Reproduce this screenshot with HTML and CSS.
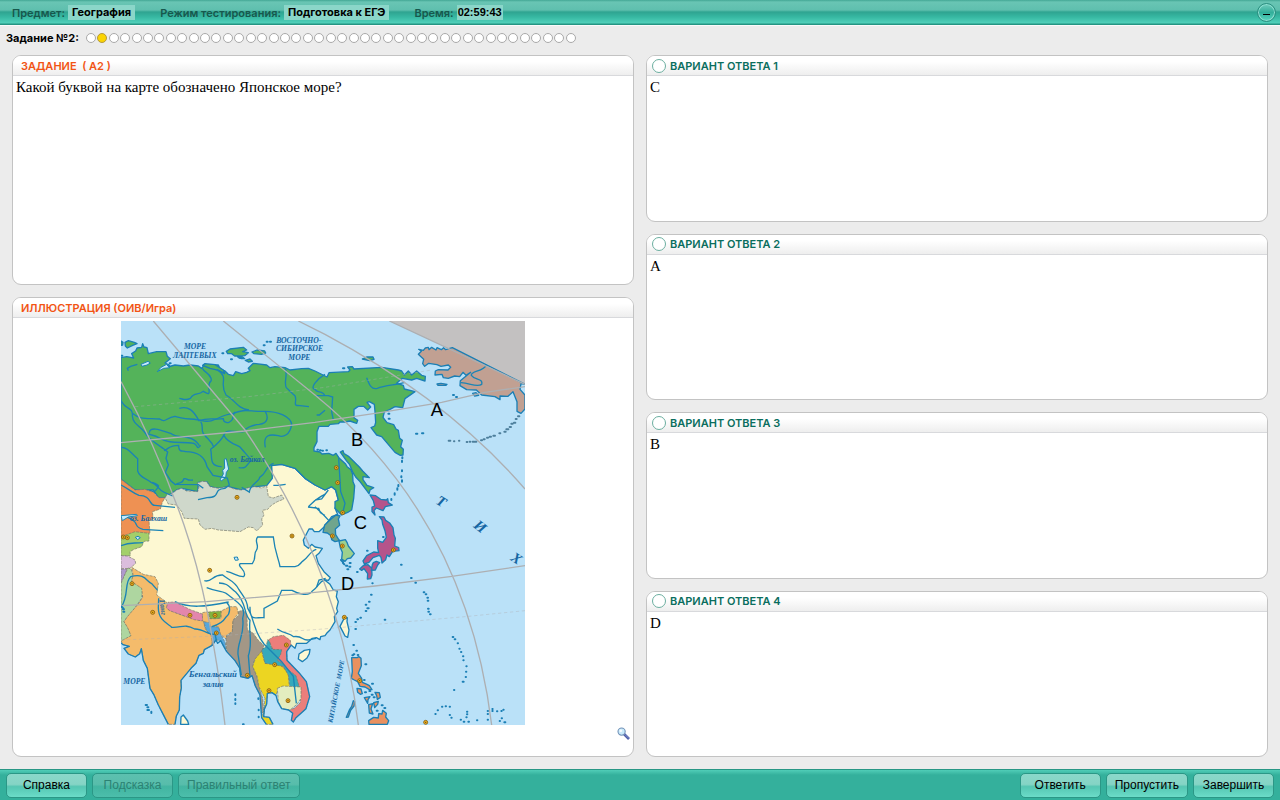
FILE: index.html
```html
<!DOCTYPE html>
<html lang="ru">
<head>
<meta charset="utf-8">
<meta name="viewport" content="width=device-width, initial-scale=1">
<title>География — Подготовка к ЕГЭ</title>
<link rel="stylesheet" href="styles.css">
</head>
<body>
<header class="topbar">
  <dl class="facts">
    <div class="fact"><dt>Предмет:</dt><dd>География</dd></div>
    <div class="fact"><dt>Режим тестирования:</dt><dd>Подготовка к ЕГЭ</dd></div>
    <div class="fact"><dt>Время:</dt><dd class="clock">02:59:43</dd></div>
  </dl>
  <button class="minimize" type="button" aria-label="Свернуть"><span class="minimize-mark"></span></button>
</header>

<nav class="progress">
  <span class="progress-label">Задание №2:</span>
  <ol class="dots">
    <li></li><li class="current"></li><li></li><li></li><li></li><li></li><li></li><li></li><li></li><li></li>
    <li></li><li></li><li></li><li></li><li></li><li></li><li></li><li></li><li></li><li></li>
    <li></li><li></li><li></li><li></li><li></li><li></li><li></li><li></li><li></li><li></li>
    <li></li><li></li><li></li><li></li><li></li><li></li><li></li><li></li><li></li><li></li>
    <li></li><li></li><li></li>
  </ol>
</nav>

<main class="workspace">
  <div class="column question-column">
    <section class="panel">
      <h2 class="panel-head task-head">ЗАДАНИЕ&nbsp; ( А2 )</h2>
      <p class="panel-text">Какой буквой на карте обозначено Японское море?</p>
    </section>
    <section class="panel figure-panel">
      <h2 class="panel-head task-head">ИЛЛЮСТРАЦИЯ (ОИВ/Игра)</h2>
      <div class="figure">
        <svg class="map" viewBox="18 18 1212 1212" role="img" aria-label="Карта Восточной Азии">
          <defs>
            <g id="city"><circle r="6" fill="#f3b21c" stroke="#805c13" stroke-width="2.5"/><circle r="2" fill="#68480f"/></g>
          </defs>
          <rect x="18" y="18" width="1212" height="1212" fill="#bae1f8"/>
          <path d="M823 18H1230V208Z" fill="#c3c1c1"/>

          <g class="coast">
            <path fill="#fdf8d2" d="M18 490L150 545L470 450L500 448L540 460L570 490L600 510L630 525L650 515L662 525L670 555L660 580L668 598L650 605L628 635L612 650L598 650L592 642L582 642L565 675L568 690L580 700L590 688L600 696L622 700L612 715L603 722L610 745L627 770L646 788L640 796L628 794L645 808L655 825L667 828L664 845L670 860L665 880L668 890L658 905L660 920L645 945L635 955L630 962L617 965L615 974L604 968L592 970L575 985L545 985L540 1000L528 990L500 1000L440 1000L350 940L18 820Z"/>
            <path fill="#54b35a" d="M18 128L35 125L56 129L50 116L62 108L66 99L80 97L83 86L87 96L96 98L100 116L125 110L153 110L157 124L166 131L150 144L163 150L158 156L180 150L205 153L225 150L250 153L260 160L268 149L310 150L316 163L330 168L340 178L355 182L362 170L380 176L395 172L405 167L400 160L415 145L455 150L465 158L480 155L510 158L525 165L560 161L580 160L600 168L636 186L642 173L700 170L705 165L698 156L712 155L717 162L800 157L850 165L860 168L868 180L880 168L890 180L905 168L920 181L931 184L930 198L905 190L890 195L862 190L845 205L865 211L868 222L900 230L870 251L863 278L840 275L825 283L808 291L804 307L816 323L836 329L843 342L850 346L854 370L862 376L857 395L865 403L864 420L856 421L840 412L800 365L785 360L768 338L779 333L782 322L780 290L778 268L763 260L756 262L767 276L758 285L746 274L730 274L717 283L717 308L728 316L725 325L705 318L690 321L675 321L670 326L645 328L640 334L612 334L606 350L606 380L597 398L597 408L615 411L621 417L641 415L655 421L663 415L673 430L691 446L697 456L707 463L713 478L714 500L719 512L716 550L710 585L698 592L680 600L660 580L660 560L670 555L662 525L650 515L630 525L600 510L570 490L540 460L500 448L470 452L472 490L455 512L420 515L380 525L340 515L310 520L285 515L275 500L250 502L248 530L200 520L185 525L150 548L130 548L115 525L60 525L18 493Z"/>
            <path fill="#54b35a" d="M30 82L40 77L58 82L66 86L53 91L37 99L31 93ZM334 109L345 102L385 97L395 105L383 110L400 113L389 122L359 123L350 116L338 116ZM411 111L426 105L449 108L452 114L439 118L417 116ZM391 136L405 132L412 139L400 141ZM368 126L380 124L389 131L379 131ZM263 151L270 146L300 149L325 165L329 176L311 166L285 160ZM742 132L755 126L774 126L777 133L764 137ZM18 78L24 82L23 90L18 91ZM676 411L684 407L687 416L702 425L733 456L743 468L763 488L744 485L744 494L756 511L776 518L765 525L762 536L735 500L722 486L714 473L704 449L694 437Z"/>
            <path fill="#c1a092" d="M910 118L919 109L911 103L925 106L931 99L940 97L942 104L950 97L963 105L966 98L979 104L986 98L992 104L1012 98L1230 208L1218 206L1215 223L1230 240V282L1218 295L1206 289L1206 260L1194 230L1179 244L1155 243L1155 254L1140 245L1100 240L1084 225L1055 224L1035 212L1036 197L1067 172L1053 181L1044 172L1034 185L1019 183L1000 190L985 188L981 178L960 180L961 168L970 164L999 165L1007 157L1000 150L978 154L966 149L941 145L929 154L923 146L926 133Z"/>
            <path fill="#c1a092" d="M1073 235L1083 233L1091 241L1079 243ZM966 207L978 205L996 208L993 211L969 211Z"/>
            <path fill="#b5548b" d="M765 540L782 542L797 553L814 555L818 551L820 563L832 570L811 575L804 587L784 579L777 587L780 600L771 590L771 576L779 573L775 557ZM793 605L807 606L812 616L824 624L834 638L837 660L841 670L839 693L851 698L852 707L833 709L823 725L816 720L812 734L801 744L798 727L793 721L774 728L762 742L748 747L744 738L755 722L776 711L791 713L788 699L788 677L803 682L814 667L810 647L803 628L801 615ZM775 743L784 739L794 743L788 750L781 765L769 766L772 749ZM734 762L746 751L759 749L770 760L771 780L767 791L757 792L758 776L747 761L740 766Z"/>
            <path fill="#70a58d" d="M663 600L675 603L670 612L674 631L661 642L662 659L669 670L674 677L660 680L650 674L648 662L637 654L624 652L629 630L649 611Z"/>
            <path fill="#9dd08d" d="M672 678L691 674L696 682L700 693L718 716L707 729L697 731L690 739L680 732L682 712L676 698Z"/>
            <path fill="#fdf8d2" d="M687 911L697 908L696 920L702 945L698 967L690 963L683 949L675 934ZM568 1006L585 1003L583 1016L576 1029L562 1040L550 1032L552 1017ZM197 1228L198 1206L205 1200L218 1218L221 1228Z"/>
            <path fill="#e99160" d="M710 1028L726 1028L732 1025L738 1030L739 1052L730 1075L740 1090L742 1102L756 1108L763 1112L771 1124L762 1123L750 1116L735 1114L728 1100L718 1095L709 1090L712 1070ZM726 1120L738 1122L742 1136L736 1138L728 1132ZM748 1148L765 1145L759 1154L758 1165ZM780 1132L793 1133L796 1147L787 1153L785 1142ZM761 1169L773 1166L768 1182L774 1197L763 1194ZM776 1163L790 1159L788 1168L779 1178ZM762 1228L761 1217L776 1207L790 1209L791 1196L801 1197L803 1186L814 1195L812 1206L821 1217L817 1228ZM715 1157L719 1160L717 1173L707 1186L700 1206L694 1207L704 1183L710 1174Z"/>
          </g>

          <g class="lands">
            <path fill="#cfd8cb" d="M150 548L158 536L170 537L185 525L200 520L215 528L248 530L252 516L247 504L262 499L275 500L285 515L310 520L340 515L360 523L380 525L400 518L420 515L440 519L455 512L460 545L475 549L500 540L507 552L487 560L470 570L458 583L442 586L447 600L440 612L443 630L425 648L415 638L400 636L375 650L340 647L310 645L290 640L270 643L255 630L250 612L208 610L200 590L185 570L160 567Z"/>
            <path fill="#ee9153" d="M18 493L60 525L90 523L115 532L132 548L150 548L142 562L136 582L112 590L115 612L102 618L105 655L60 655L18 665Z"/>
            <path fill="#a3cf6a" d="M18 665L60 650L102 655L102 678L87 679L80 695L57 703L45 710L46 722L18 722Z"/>
            <path fill="#dbbddd" d="M18 722L38 723L60 735L62 745L45 760L18 762Z"/>
            <path fill="#af99cd" d="M18 762H37L27 785L25 800L18 805Z"/>
            <path fill="#aed6a0" d="M18 805L28 782L39 759L48 762L54 780L50 800L72 808L83 823L80 850L55 885L36 907L27 920L38 937L49 963L18 981Z"/>
            <path fill="#f4bb6b" d="M50 757L85 778L120 785L130 805L125 840L155 862L160 884L200 900L260 917L262 893L278 890L285 910H318V888L345 875L365 875L370 895L354 916L352 950L335 960L334 973L315 957L311 937L285 935L266 920L270 940L288 960L292 981L290 992L268 1004L265 1015L252 1021L243 1045L228 1060L198 1096L199 1119L194 1146L193 1185L184 1203L180 1228H160L148 1205L130 1170L116 1138L105 1120L97 1060L85 1036L79 1001L74 1016L61 1026L40 1017L27 1000L43 994L24 989L18 978L48 962L38 938L27 920L38 904L69 868L83 847L80 820L50 800L54 778Z"/>
            <path fill="#e386ac" d="M154 878L159 862L180 861L226 884L262 897L263 918L238 914L200 900L164 887Z"/>
            <path fill="#82b33e" d="M280 891L318 888L317 908L306 911H285Z"/>
            <path fill="#57a7dc" d="M266 920L285 923V935L311 936L316 956L331 983L333 1004L326 994L317 977L303 975L292 993L291 963L274 946Z"/>
            <path fill="#a39786" d="M370 890L384 885L396 897L397 944L414 954L430 976L447 992L440 1010L416 1040L414 1056L426 1086L430 1110L443 1150L446 1190L439 1196L435 1140L421 1113L411 1082L399 1090L377 1085L374 1059L360 1037L335 1010L333 966L352 950L354 916L371 901Z"/>
            <path fill="#ecd522" d="M440 1008L450 1045L483 1047L506 1054L520 1080L523 1116L490 1120L483 1141L471 1133L457 1135L455 1167L448 1183L446 1205L463 1207L474 1228H454L440 1208L447 1187L450 1150L432 1115L427 1086L413 1054L421 1031Z"/>
            <path fill="#eb7e7b" d="M460 975L475 965L505 961L526 976L528 991L515 1010L516 1036L552 1073L574 1100L584 1145L573 1181L543 1208L535 1221L529 1216L533 1195L521 1185L538 1180L556 1163L557 1122L532 1086L502 1055L483 1042L499 1009L494 1003L475 1005Z"/>
            <path fill="#36a9bb" d="M440 1005L453 995L458 974L464 980L471 1003L500 1004L497 1018L487 1035L503 1046L523 1067L543 1082L553 1116H525L520 1080L505 1054L450 1045Z"/>
            <path fill="#e3edbf" d="M487 1120L504 1113L558 1116V1150L546 1168L525 1185L500 1181L490 1160Z"/>
          </g>

          <g class="coast shoreline">
            <path d="M18 984L24 989L43 994L27 1000L40 1017L61 1026L74 1016L79 1001L85 1036L97 1060L105 1120L116 1138L130 1170L148 1205L160 1228M180 1228L184 1203L193 1185L194 1146L199 1119L198 1096L228 1060L243 1045L252 1021L265 1015L268 1004L290 992L303 975L308 985L317 977L326 994L335 1010L360 1037L374 1059L377 1085L399 1090L411 1082L421 1113L435 1140L439 1196L440 1208L454 1228M474 1228L463 1207L446 1205L448 1183L455 1167L457 1135L471 1133L483 1141L488 1160L500 1181L521 1185L533 1195L529 1216L535 1221L543 1208L573 1181L584 1145L574 1100L552 1073L516 1036L515 1010L528 991"/>
          </g>

          <g class="lakes">
            <path d="M328 433L334 431L341 462L334 472L332 487L319 498L316 493L325 477L323 466L329 459ZM18 602L65 598L67 602L40 606L22 617ZM78 148L99 139L106 144L96 150L81 154ZM127 170L138 157L155 148L159 154L165 158L146 160ZM61 667L69 664L76 668L68 674ZM357 727L367 726L370 735L361 736Z"/>
          </g>

          <g class="rivers">
            <path d="M18 256C30 285 55 275 52 303C55 330 74 330 90 353C98 370 130 390 144 400L158 411L153 430L160 450L151 472L168 498L180 508L250 509L265 520M52 295C75 315 98 309 134 312C152 325 152 308 180 304C205 314 240 310 260 317C300 326 310 300 353 296C390 280 402 290 445 289C490 288 528 305 530 329C525 360 505 368 490 362C465 357 443 358 451 397"/>
            <path d="M193 250C205 252 212 258 226 250C240 228 248 244 265 229C280 237 284 243 282 220C280 190 293 206 288 190C280 170 270 175 262 160M193 280C220 272 235 286 252 317C281 307 300 315 325 311C325 325 343 324 343 321C361 313 349 300 361 290M306 164C345 188 310 204 333 240C360 254 365 280 402 285M297 398C290 377 275 370 270 361C254 350 268 333 257 320M451 290C460 305 460 325 433 328C410 330 390 340 386 350C360 354 332 340 328 358C320 374 300 393 287 403C293 425 280 455 320 455"/>
            <path d="M40 167L37 160L47 154L67 148M327 362C340 386 370 391 375 396C398 423 403 427 408 436C392 455 394 461 371 458"/>
            <path d="M88 351C110 365 110 355 135 370C160 388 200 380 230 384C252 384 242 410 257 391M103 354C104 330 144 348 169 356C194 374 230 354 253 392M147 407C166 398 162 392 191 391C190 416 207 405 212 410C250 410 270 427 276 455L294 481L337 489L343 510L330 520C290 523 322 547 276 548L249 554M180 510C195 498 200 510 207 491C221 490 212 498 234 495M18 397C40 396 50 418 68 431V468C75 490 95 489 108 502C130 507 128 526 148 532L173 543M112 502C140 512 131 515 120 528M510 160C520 180 505 201 514 218L536 239C551 245 532 275 548 271L582 275M630 178C605 192 583 221 600 223C605 236 623 225 630 243M605 300H613L630 286M380 517L403 531C405 506 434 501 434 487C457 475 449 454 476 445M475 511H490L512 508M655 315L650 290L653 246L640 242H600M755 188C763 210 770 225 787 220C810 210 846 210 870 202M671 430L675 495L677 530L690 565L683 594"/>
            <path d="M600 555L620 552L640 525M600 575L626 600L641 616M581 574C603 550 617 546 630 537M579 576L611 580L616 593L630 602M18 510C42 522 51 533 72 541C110 541 102 572 120 571L180 577M39 608C78 622 50 634 84 643L145 647M18 692C45 680 53 686 84 683"/>
            <path d="M268 797C291 804 292 778 323 780C340 795 359 797 372 824C383 843 397 853 398 879L408 899C423 947 430 967 447 987L500 1040L535 1084L544 1165M275 818C309 832 330 828 337 838C387 875 391 883 383 910C390 960 366 982 369 1018L379 1080M312 804C342 805 341 817 362 831C397 866 384 894 405 916C400 950 414 985 400 1022L405 1083M334 769C356 773 369 786 386 785C400 768 364 754 376 746H412C426 727 414 717 424 706C435 691 416 679 428 666H475C480 715 491 730 495 755H540C557 752 553 745 566 736C580 728 584 709 604 703M405 875C404 920 420 906 447 908V880L487 858L500 826H531C553 839 583 844 592 828C613 814 611 800 628 795"/>
            <path d="M18 877C43 842 27 802 47 785C90 773 95 800 110 806L128 826M180 860C220 880 270 876 341 861M131 850L130 878C130 920 166 929 170 937C200 939 208 925 239 942C262 940 280 960 300 958L304 975M290 935C310 930 325 920 334 905C345 897 349 875 334 861M487 942C508 957 521 952 536 965C567 960 560 983 588 973L603 970M605 816L612 795L632 790M1115 149C1105 171 1067 167 1069 181C1080 197 1105 189 1100 208C1085 218 1065 204 1038 203"/>
          </g>

          <g class="grid">
            <path d="M18 200Q130 407 207 630Q287 860 330 1230M115 18L390 345C510 520 680 820 730 1230M325 18L600 240C840 435 1070 740 1130 1230M550 18L630 58Q1000 255 1230 522M823 18L1230 208M18 383L390 348L600 322L800 292L980 262L1110 232L1230 215M18 872L275 860L600 832L780 813L1005 785L1230 752"/>
            <path class="dashed" d="M60 275L400 245L630 217L950 165M18 975L300 963L600 944L1050 905L1230 887"/>
          </g>

          <g class="isles">
            <path d="M322 115h3M348 133h3M373 128h5M446 91h3M455 80h3M465 80h3M164 145h3M18 122h4M684 160h4M1014 240h3M1023 246h3M903 356h4M921 355h4M820 296h3M821 311h3M607 404h2M615 406h2M622 407h2M634 406h2"/>
            <path d="M862 427v3M861 437v4M861 466v3M859 484v3M861 496v4M850 510v4M847 520v4M839 535v4M829 552v3M756 707h2M804 666h2M726 771h2M772 805h1M768 839h2M762 860h2M752 869h2M757 880h4M752 888h2M858 749h2M888 789h2M901 803h2M926 832h2M932 838h2M937 848h2M938 857h2M939 881h2M940 890h2M945 898h2M809 914h2M736 908h2M727 913h2M721 921h2M721 942h2M715 990h2M724 1007h2M716 1018h2M712 1021h2M728 1020h2M751 1048h3M747 1095h2M771 1106h3M750 1132h3M763 1128h3M770 1139h3M776 1147h3M800 1171h3M785 1187h3M808 1179h3"/>
            <path d="M1013 966h2M1019 973h2M1028 985h1M1033 1001h1M1038 1011h1M1044 1024h1M1045 1036h1M1054 1054h1M1053 1070h1M1052 1086h1M1043 1100h3M1017 1125h1M961 1197h1M968 1186h1M981 1175h1M992 1174h1M1004 1175h1M1004 1200h1M1009 1208h1M1037 1214h1M1046 1220h2M1054 1207h1M1060 1220h2M1056 1198h1M1056 1190h1M1086 1216h1M1118 1197h1M1118 1188h1M1118 1214h1M1132 1188h1M1132 1182h1M1146 1189h1M1159 1188h1M1165 1184h1M1154 1218h1M1160 1210h1M1168 1222h3"/>
            <path class="outlined" d="M1001 377h5M1017 379h1M1032 377h1M1055 381h2M1064 380h2M1073 380h4M1080 380h4M1098 376h3M1106 373h3M1116 368h3M1124 365h4M1135 362h5M1153 355h3M1168 350h4M1174 343h6M1184 336h4M1189 326h4M1197 323h4M1202 312h3M1209 304h4"/>
            <path d="M678 735l6 6M684 744l4 4M693 752h4M704 744h3M703 755h3M697 763h3M361 1138v3M361 1152v3M361 1165v2M430 1150v2M431 1184v2M431 1205v2M92 1170h4M97 1177h3M97 1185h5M109 1190v4M384 1228h2M20 875l5 5M24 883h3M25 890h3"/>
          </g>

          <g class="sea-names">
            <text x="207" y="103">МОРЕ</text>
            <text x="174" y="129">ЛАПТЕВЫХ</text>
            <text x="484" y="85">ВОСТОЧНО-</text>
            <text x="483" y="109">СИБИРСКОЕ</text>
            <text x="520" y="134">МОРЕ</text>
            <text x="344" y="440">оз. Байкал</text>
            <text x="45" y="617">оз. Балхаш</text>
            <text x="25" y="1107">МОРЕ</text>
            <text x="222" y="1087" class="bay">Бенгальский</text>
            <text x="263" y="1117" class="bay">залив</text>
            <text transform="translate(133 855) rotate(82)">Ганг</text>
            <text class="strait" transform="translate(652 1224) rotate(-79)">КИТАЙСКОЕ&#160; МОРЕ</text>
            <text class="ocean" transform="translate(960 565) rotate(31)">Т</text>
            <text class="ocean" transform="translate(1073 635) rotate(38)">И</text>
            <text class="ocean" transform="translate(1184 734) rotate(33)">Х</text>
          </g>
          <g>
            <use href="#city" x="366" y="547"/><use href="#city" x="664" y="458"/><use href="#city" x="668" y="503"/><use href="#city" x="683" y="593"/>
            <use href="#city" x="652" y="663"/><use href="#city" x="682" y="693"/><use href="#city" x="835" y="705"/><use href="#city" x="688" y="907"/>
            <use href="#city" x="531" y="663"/><use href="#city" x="284" y="766"/><use href="#city" x="37" y="668"/><use href="#city" x="25" y="666"/>
            <use href="#city" x="51" y="806"/><use href="#city" x="113" y="892"/><use href="#city" x="225" y="901"/><use href="#city" x="300" y="901"/>
            <use href="#city" x="304" y="954"/><use href="#city" x="397" y="1081"/><use href="#city" x="462" y="1127"/><use href="#city" x="479" y="1049"/>
            <use href="#city" x="514" y="990"/><use href="#city" x="519" y="1157"/><use href="#city" x="734" y="1097"/><use href="#city" x="932" y="1222"/>
          </g>
          <g class="letters">
            <text x="947" y="304">А</text>
            <text x="708" y="392">В</text>
            <text x="716" y="642">С</text>
            <text x="678" y="825">D</text>
          </g>
        </svg>
      </div>
      <button class="zoom" type="button" aria-label="Увеличить">
        <svg class="zoom-icon" viewBox="0 0 14 14" aria-hidden="true">
          <path d="M7 7L12 12" stroke="#4b5da8" stroke-width="2.6"/>
          <path d="M8 7.5L12 11.5" stroke="#93a0d4" stroke-width="0.8"/>
          <circle cx="4.6" cy="4.6" r="3.6" fill="#c9eafb" stroke="#7292b8" stroke-width="1.1"/>
          <circle cx="3.8" cy="3.8" r="1.4" fill="#f5fcff"/>
        </svg>
      </button>
    </section>
  </div>

  <form class="column answer-column" id="answers">
    <section class="panel">
      <label class="panel-head answer-head"><input class="choice" type="radio" name="answer" value="1">ВАРИАНТ ОТВЕТА 1</label>
      <p class="panel-text">С</p>
    </section>
    <section class="panel">
      <label class="panel-head answer-head"><input class="choice" type="radio" name="answer" value="2">ВАРИАНТ ОТВЕТА 2</label>
      <p class="panel-text">А</p>
    </section>
    <section class="panel">
      <label class="panel-head answer-head"><input class="choice" type="radio" name="answer" value="3">ВАРИАНТ ОТВЕТА 3</label>
      <p class="panel-text">В</p>
    </section>
    <section class="panel">
      <label class="panel-head answer-head"><input class="choice" type="radio" name="answer" value="4">ВАРИАНТ ОТВЕТА 4</label>
      <p class="panel-text">D</p>
    </section>
  </form>
</main>

<footer class="bottombar">
  <div class="actions">
    <button class="action" type="button">Справка</button>
    <button class="action" type="button" disabled>Подсказка</button>
    <button class="action" type="button" disabled>Правильный ответ</button>
  </div>
  <div class="actions">
    <button class="action" type="submit" form="answers">Ответить</button>
    <button class="action" type="button">Пропустить</button>
    <button class="action" type="button">Завершить</button>
  </div>
</footer>
</body>
</html>
```

FILE: styles.css
```css
* {
  box-sizing: border-box;
}

body {
  margin: 0;
  min-height: 100vh;
  display: flex;
  flex-direction: column;
  background: #ececec;
  color: #000;
  font-family: Inter, sans-serif;
  font-size: 11px;
}

/* Top bar */
.topbar {
  display: flex;
  align-items: center;
  justify-content: space-between;
  height: 25px;
  padding: 0 4px 0 12px;
  background: linear-gradient(#43a795 0, #69c5b4 2px, #5fbfae 10px, #2fa491 12px, #37b8a2 17px, #50d0ba 23px, #259583 24px);
}

.facts {
  display: flex;
  gap: 25px;
  margin: 0;
}

.fact {
  display: flex;
  align-items: center;
  gap: 3px;
}

.fact dt {
  color: #17584d;
  font-weight: 600;
}

.fact dd {
  margin: 0;
  padding: 0 4px;
  background: #8bd6c9;
  font-weight: 700;
  line-height: 15px;
}

.fact .clock {
  padding: 0 1px;
  font-family: "Liberation Sans", sans-serif;
}

.minimize {
  display: grid;
  place-items: center;
  width: 19px;
  height: 19px;
  padding: 0;
  border: 1px solid #2b8f80;
  border-radius: 50%;
  background: linear-gradient(#72cdbd, #33ae9a 50%, #58d6c0);
  box-shadow: inset 0 0 0 1px #8fe0d2;
}

.minimize-mark {
  width: 7px;
  height: 1px;
  margin-top: 4px;
  background: #000;
}

/* Progress row */
.progress {
  display: flex;
  align-items: center;
  gap: 7px;
  height: 30px;
  padding: 0 6px 6px;
  border-top: 1px solid #fafafa;
}

.progress-label {
  font-weight: 700;
}

.dots {
  display: flex;
  justify-content: space-between;
  width: 490px;
  margin: 0;
  padding: 0;
  list-style: none;
}

.dots li {
  width: 10px;
  height: 10px;
  border: 1px solid #a9a9a9;
  border-radius: 50%;
  background: #fff;
}

.dots .current {
  border-color: #b59a3c;
  background: #fbd403;
}

/* Panels */
.workspace {
  flex: 1;
  display: grid;
  grid-template-columns: 1fr 1fr;
  gap: 12px;
  padding: 0 12px 12px;
}

.column {
  display: grid;
  gap: 12px;
}

.question-column {
  grid-template-rows: 1fr 2fr;
}

.answer-column {
  grid-template-rows: repeat(4, 1fr);
}

.panel {
  position: relative;
  border: 1px solid #c3c3c3;
  border-radius: 9px;
  background: #fff;
  overflow: hidden;
}

.panel-head {
  display: flex;
  align-items: center;
  height: 20px;
  margin: 0;
  border-bottom: 1px solid #d8d9dc;
  background: linear-gradient(#fff 30%, #eee);
  font-size: 11px;
  font-weight: 600;
}

.task-head {
  padding: 0 8px;
  color: #f25414;
}

.answer-head {
  gap: 4px;
  padding: 0 5px;
  color: #0a6e5e;
}

.choice {
  appearance: none;
  width: 14px;
  height: 14px;
  margin: 0;
  border: 1px solid #6bae9f;
  border-radius: 50%;
  background: #fff;
}

.choice:checked {
  background: radial-gradient(#fbd403 50%, #fff 60%);
}

.panel-text {
  margin: 0;
  padding: 3px;
  font-family: "Liberation Serif", serif;
  font-size: 15px;
  line-height: 17px;
}

/* Illustration */
.figure {
  display: flex;
  justify-content: center;
  padding: 3px;
}

.map {
  flex: 0 1 404px;
  aspect-ratio: 1;
}

.coast {
  stroke: #1b7fb5;
  stroke-width: 4;
  stroke-linejoin: round;
}

.shoreline {
  fill: none;
}

.lands {
  stroke: #77786a;
  stroke-width: 2;
  stroke-dasharray: 9 3;
}

.rivers {
  fill: none;
  stroke: #1b84b5;
  stroke-width: 4;
}

.lakes {
  fill: #c8e9fb;
  stroke: #1b84b5;
  stroke-width: 3;
}

.grid {
  fill: none;
  stroke: #adafb2;
  stroke-width: 4;
}

.dashed {
  stroke-width: 2;
  stroke-dasharray: 10 8;
  opacity: 0.6;
}

.isles {
  fill: none;
  stroke: #1b7fb5;
  stroke-width: 6;
  stroke-linecap: round;
}

.outlined {
  stroke: #4d7f9c;
}

.sea-names {
  fill: #1566a3;
  font-family: "Liberation Serif", serif;
  font-size: 23px;
  font-style: italic;
  font-weight: 700;
}

.bay {
  font-size: 26px;
}

.strait {
  font-size: 20px;
}

.ocean {
  font-size: 44px;
}

.letters {
  fill: #000;
  font-family: "Liberation Sans", sans-serif;
  font-size: 55px;
}

.zoom {
  position: absolute;
  right: 2px;
  bottom: 15px;
  width: 14px;
  height: 14px;
  padding: 0;
  border: 0;
  background: none;
}

.zoom-icon {
  display: block;
  width: 14px;
  height: 14px;
}

/* Bottom bar */
.bottombar {
  display: flex;
  align-items: center;
  justify-content: space-between;
  height: 31px;
  padding: 0 6px;
  border-top: 1px solid #299785;
  background: linear-gradient(#50cdb7, #34b09c 5px);
}

.actions {
  display: flex;
  gap: 5px;
}

.action {
  min-width: 81px;
  height: 25px;
  padding: 0 8px;
  border: 1px solid #2b9786;
  border-radius: 5px;
  background: linear-gradient(#8bd8ca 0, #85d4c5 45%, #55c6b2 55%, #6bdcc8);
  color: #000;
  font-family: "Liberation Sans", sans-serif;
  font-size: 12px;
}

.action:disabled {
  background: linear-gradient(#5dc0af 0, #58bdab 45%, #42b5a1 55%, #4cbeab);
  color: #2c8273;
}
```
